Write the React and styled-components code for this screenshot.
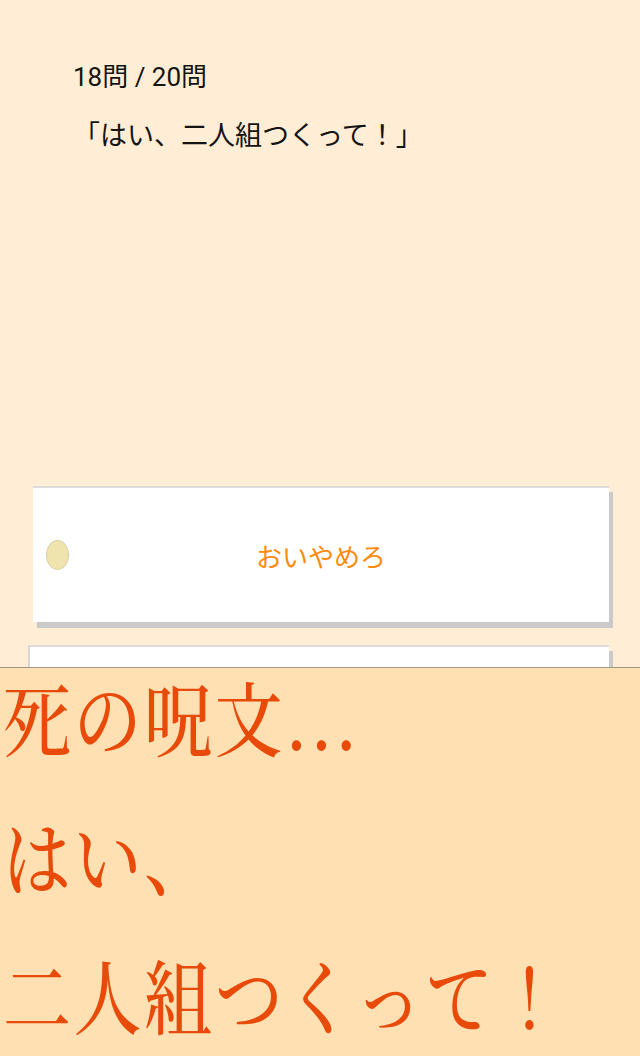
import React from 'react'
import styled, { createGlobalStyle } from 'styled-components'

const GlobalStyle = createGlobalStyle`
  html, body {
    margin: 0;
    padding: 0;
    background: #ffeed5;
  }
  body {
    font-family: Roboto, "Noto Sans CJK JP", sans-serif;
    color: #141414;
  }
  * {
    box-sizing: border-box;
  }
`

const choices = [
  { id: 1, label: 'おいやめろ' },
  { id: 2, label: '', shifted: true },
]

export default function App() {
  return (
    <Screen>
      <GlobalStyle />
      <Header>
        <Progress>18問 / 20問</Progress>
        <Question>「はい、二人組つくって！」</Question>
      </Header>

      <ChoiceList>
        {choices.map((c) => (
          <Choice key={c.id} $shifted={c.shifted}>
            {c.label && <Marker />}
            <ChoiceText>{c.label}</ChoiceText>
          </Choice>
        ))}
      </ChoiceList>

      <Banner>
        <BannerLine>死の呪文...</BannerLine>
        <BannerLine>はい、</BannerLine>
        <BannerLine>二人組つくって！</BannerLine>
      </Banner>
    </Screen>
  )
}

const Screen = styled.div`
  position: relative;
  width: 640px;
  height: 1056px;
  overflow: hidden;
  background: #ffeed5;
`
const Header = styled.div`
  display: flex;
  flex-direction: column;
  gap: 26px;
  padding: 62px 0 0 73px;
`
const Progress = styled.div`
  font-size: 26px;
  line-height: 31px;
`
const Question = styled.div`
  font-size: 27px;
  line-height: 34px;
`
const ChoiceList = styled.div`
  display: flex;
  flex-direction: column;
  gap: 23px;
  margin-top: 333px;
  padding: 0 31px 0 33px;
`
const Choice = styled.div`
  display: grid;
  grid-template-columns: 23px 1fr 23px;
  align-items: center;
  height: 136px;
  padding: 0 13px;
  background: #fff;
  border-top: 2px solid #dcdcdc;
  box-shadow: 4px 6px 0 #cacaca;
  margin-left: ${(p) => (p.$shifted ? '-5px' : '0')};
  border-left: ${(p) => (p.$shifted ? '2px solid #d6d6d6' : 'none')};
`
const Marker = styled.span`
  grid-column: 1;
  width: 23px;
  height: 30px;
  border-radius: 50%;
  background: #efe3ae;
  border: 1px solid #d9d0a6;
`
const ChoiceText = styled.span`
  grid-column: 2;
  text-align: center;
  font-size: 26px;
  color: #ff8a0c;
`
const Banner = styled.div`
  position: absolute;
  left: 0;
  right: 0;
  bottom: 0;
  height: 389px;
  display: flex;
  flex-direction: column;
  gap: 58px;
  padding: 7px 0 0 3px;
  background: #ffe0b2;
  border-top: 1px solid #a09783;
`
const BannerLine = styled.div`
  font-family: "Noto Serif CJK JP", "Noto Sans CJK JP", serif;
  font-size: 81px;
  font-weight: 500;
  line-height: 81px;
  letter-spacing: 3px;
  color: #e84a0a;
  white-space: nowrap;
  transform: scaleX(0.84);
  transform-origin: left center;
`
